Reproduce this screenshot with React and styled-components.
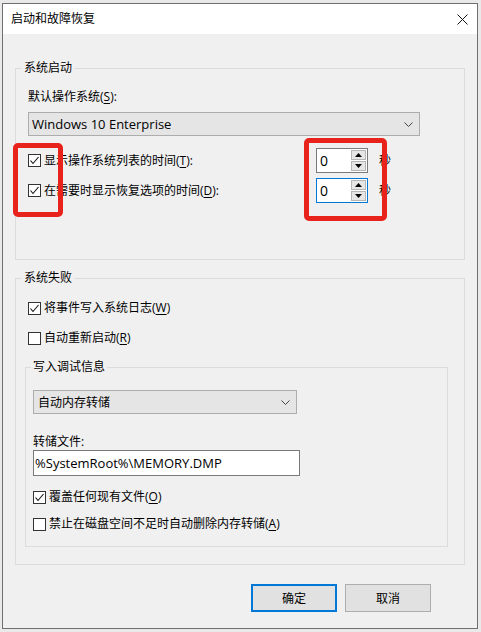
import React from 'react';
import styled, { createGlobalStyle } from 'styled-components';

const Global = createGlobalStyle`
  html, body { margin: 0; padding: 0; background: #e9e9e9; }
  body {
    font-family: "Open Sans", "Noto Sans CJK SC", sans-serif;
    font-size: 12px;
    color: #000;
  }
  * { box-sizing: border-box; }
`;

const Window = styled.div`
  position: relative;
  margin: 3px 0 0 2px;
  width: 476px;
  height: 626px;
  border: 1px solid #6f6f6f;
  background: #f0f0f0;
  display: flex;
  flex-direction: column;
`;

const TitleBar = styled.div`
  height: 30px;
  background: #fff;
  display: flex;
  align-items: center;
  justify-content: space-between;
  padding-left: 8px;
  flex: none;
`;

const Title = styled.div`
  font-size: 12px;
  line-height: 16px;
`;

const CloseBox = styled.div`
  width: 30px;
  height: 30px;
  display: flex;
  align-items: center;
  justify-content: center;
`;

const Body = styled.div`
  padding: 26px 12px 0 12px;
  display: flex;
  flex-direction: column;
  flex: 1;
`;

const Group = styled.fieldset`
  margin: ${p => p.$mt || 0}px 0 0 ${p => p.$ml || 0}px;
  padding: 0;
  border: 1px solid #dcdcdc;
  min-width: 0;
  width: ${p => (p.$w ? `${p.$w}px` : 'auto')};
`;

const Legend = styled.legend`
  margin-left: ${p => p.$ml || 6}px;
  padding: 0 2px;
  line-height: 16px;
  font-size: 12px;
`;

const GroupContent = styled.div`
  padding: ${p => p.$pad};
  display: flex;
  flex-direction: column;
`;

const Label = styled.div`
  line-height: 16px;
  margin-top: ${p => p.$mt || 0}px;
`;

const U = styled.span`
  text-decoration: underline;
  text-underline-offset: 2px;
`;

const Combo = styled.div`
  margin-top: ${p => p.$mt || 0}px;
  width: ${p => p.$w}px;
  height: 24px;
  background: #e5e5e5;
  border: 1px solid #adadad;
  display: flex;
  align-items: center;
  justify-content: space-between;
  padding: 0 6px 0 ${p => p.$pl || 3}px;
  font-size: ${p => p.$fs || 12}px;
`;

const TextBox = styled.div`
  width: 267px;
  height: 26px;
  background: #fff;
  border: 1px solid #7a7a7a;
  display: flex;
  align-items: center;
  padding-left: 1px;
  font-size: 13px;
`;

const TimeRow = styled.div`
  margin-top: ${p => p.$mt || 0}px;
  display: grid;
  grid-template-columns: 288px 52px auto;
  align-items: center;
  height: 25px;
`;

const CheckRow = styled.div`
  margin-top: ${p => p.$mt || 0}px;
  display: flex;
  align-items: center;
  gap: 3px;
  height: 20px;
  line-height: 16px;
  white-space: nowrap;
`;

const Box = styled.div`
  width: 13px;
  height: 13px;
  border: 1px solid #333;
  background: #fff;
  flex: none;
  display: flex;
  align-items: center;
  justify-content: center;
`;

const Spinner = styled.div`
  width: 52px;
  height: 25px;
  background: #fff;
  border: 1px solid ${p => (p.$focus ? '#0078d7' : '#7a7a7a')};
  display: flex;
  align-items: center;
  justify-content: space-between;
`;

const SpinValue = styled.span`
  padding-left: 3px;
  font-size: 14px;
`;

const SpinCol = styled.div`
  width: 16px;
  height: 100%;
  padding: 1px 1px 1px 0;
  display: flex;
  flex-direction: column;
  gap: 1px;
`;

const SpinBtn = styled.div`
  flex: 1;
  background: #e6e6e6;
  border: 1px solid #b5b5b5;
  display: flex;
  align-items: center;
  justify-content: center;
`;

const Unit = styled.span`
  line-height: 16px;
  padding-left: 11px;
`;

const Buttons = styled.div`
  margin-top: 19px;
  margin-right: 34px;
  display: flex;
  justify-content: flex-end;
  gap: 8px;
`;

const Button = styled.div`
  width: 86px;
  height: 28px;
  background: #e1e1e1;
  border: ${p => (p.$primary ? '2px solid #0078d7' : '1px solid #adadad')};
  display: flex;
  align-items: center;
  justify-content: center;
  font-size: 12px;
`;

const RedMark = styled.div`
  position: absolute;
  left: ${p => p.$x}px;
  top: ${p => p.$y}px;
  width: ${p => p.$w}px;
  height: ${p => p.$h}px;
  border: 5px solid #e8231b;
  border-radius: 5px;
  pointer-events: none;
`;

const Chevron = () => (
  <svg width="9" height="5" viewBox="0 0 9 5">
    <polyline points="0.5,0.5 4.5,4.5 8.5,0.5" fill="none" stroke="#444" strokeWidth="1" />
  </svg>
);

const Check = ({ checked }) => (
  <Box>
    {checked && (
      <svg width="11" height="11" viewBox="0 0 11 11">
        <polyline points="1.5,5.5 4,8.5 9.5,2" fill="none" stroke="#111" strokeWidth="1.1" />
      </svg>
    )}
  </Box>
);

const Tri = ({ up }) => (
  <svg width="7" height="4" viewBox="0 0 7 4">
    <polygon points={up ? '0,4 7,4 3.5,0' : '0,0 7,0 3.5,4'} fill="#000" />
  </svg>
);

const Spin = ({ focus }) => (
  <Spinner $focus={focus}>
    <SpinValue>0</SpinValue>
    <SpinCol>
      <SpinBtn><Tri up /></SpinBtn>
      <SpinBtn><Tri /></SpinBtn>
    </SpinCol>
  </Spinner>
);

export default function App() {
  return (
    <>
      <Global />
      <Window>
        <TitleBar>
          <Title>启动和故障恢复</Title>
          <CloseBox>
            <svg width="11" height="11" viewBox="0 0 11 11">
              <path d="M0.5 0.5 L10.5 10.5 M10.5 0.5 L0.5 10.5" stroke="#111" strokeWidth="1" />
            </svg>
          </CloseBox>
        </TitleBar>
        <Body>
          <Group>
            <Legend>系统启动</Legend>
            <GroupContent $pad="13px 12px 56px 12px">
              <Label>默认操作系统(<U>S</U>):</Label>
              <Combo $mt={7} $w={392} $fs={13}>
                <span>Windows 10 Enterprise</span>
                <Chevron />
              </Combo>
              <TimeRow $mt={12}>
                <CheckRow>
                  <Check checked />
                  <span>显示操作系统列表的时间(<U>T</U>):</span>
                </CheckRow>
                <Spin />
                <Unit>秒</Unit>
              </TimeRow>
              <TimeRow $mt={5}>
                <CheckRow>
                  <Check checked />
                  <span>在需要时显示恢复选项的时间(<U>D</U>):</span>
                </CheckRow>
                <Spin focus />
                <Unit>秒</Unit>
              </TimeRow>
            </GroupContent>
          </Group>

          <Group $mt={10}>
            <Legend>系统失败</Legend>
            <GroupContent $pad="12px 12px 17px 12px">
              <CheckRow>
                <Check checked />
                <span>将事件写入系统日志(<U>W</U>)</span>
              </CheckRow>
              <CheckRow $mt={10}>
                <Check />
                <span>自动重新启动(<U>R</U>)</span>
              </CheckRow>
              <Group $mt={11} $ml={-3} $w={423}>
                <Legend $ml={5}>写入调试信息</Legend>
                <GroupContent $pad="15px 7px 12px 7px">
                  <Combo $w={264} $pl={4}>
                    <span>自动内存转储</span>
                    <Chevron />
                  </Combo>
                  <Label $mt={20}>转储文件:</Label>
                  <TextBox>%SystemRoot%\MEMORY.DMP</TextBox>
                  <CheckRow $mt={11}>
                    <Check checked />
                    <span>覆盖任何现有文件(<U>O</U>)</span>
                  </CheckRow>
                  <CheckRow $mt={7}>
                    <Check />
                    <span>禁止在磁盘空间不足时自动删除内存转储(<U>A</U>)</span>
                  </CheckRow>
                </GroupContent>
              </Group>
            </GroupContent>
          </Group>

          <Buttons>
            <Button $primary>确定</Button>
            <Button>取消</Button>
          </Buttons>
        </Body>
        <RedMark $x={10} $y={139} $w={50} $h={74} />
        <RedMark $x={301} $y={134} $w={83} $h={83} />
      </Window>
    </>
  );
}
